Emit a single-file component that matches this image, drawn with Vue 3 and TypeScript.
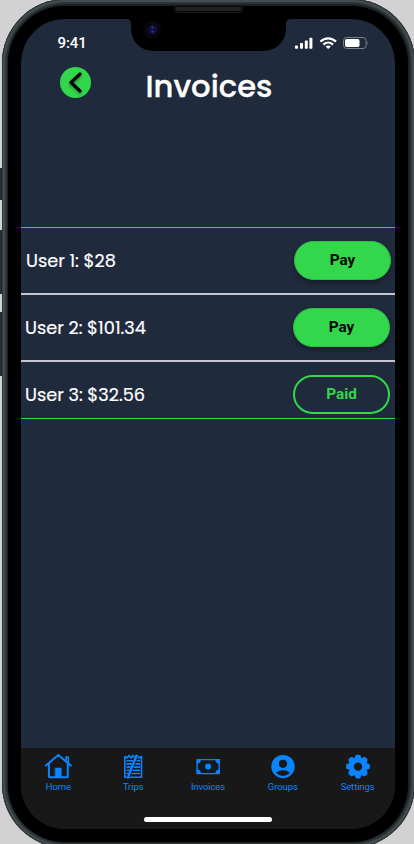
<script setup lang="ts">
interface Invoice {
  id: number
  label: string
  paid: boolean
}

const invoices: Invoice[] = [
  { id: 1, label: 'User 1: $28', paid: false },
  { id: 2, label: 'User 2: $101.34', paid: false },
  { id: 3, label: 'User 3: $32.56', paid: true },
]

const tabs: string[] = ['Home', 'Trips', 'Invoices', 'Groups', 'Settings']
const teeth: number[] = [0, 45, 90, 135, 180, 225, 270, 315]
</script>

<template>
  <div class="stage">
    <i class="side mute"></i>
    <i class="side up"></i>
    <i class="side down"></i>
    <div class="frame">
      <div class="bezel">
        <i class="speaker"></i>
        <main class="screen">
          <svg class="notch" width="165" height="33" viewBox="0 0 165 33">
            <path d="M0 0C4 0 5 2 5 6V9C5 23 15 32 29 32H136C150 32 160 23 160 9V6C160 2 161 0 165 0Z" fill="#000" />
            <circle cx="26.5" cy="10.5" r="9" fill="#08060b" />
            <circle cx="26.5" cy="10.5" r="5" fill="#0c1038" />
            <circle cx="26.5" cy="8.5" r="1.3" fill="#24337e" />
            <circle cx="26.5" cy="12.5" r="1.3" fill="#24337e" />
          </svg>

          <div class="status">
            <span class="time">9:41</span>
            <svg width="76" height="14" viewBox="0 0 76 14" fill="#fff">
              <rect x="1" y="9.4" width="3" height="3.4" rx=".7" />
              <rect x="6" y="6.9" width="3" height="5.9" rx=".7" />
              <rect x="10.8" y="4.4" width="3" height="8.4" rx=".7" />
              <rect x="15.4" y="1.8" width="3" height="11" rx=".7" />
              <g fill="none" stroke="#fff" stroke-width="2.2">
                <path d="M26.4 5.6C31 1.2 37.4 1.2 42 5.6" />
                <path d="M29.4 8.6C32.2 5.9 36.2 5.9 39 8.6" />
              </g>
              <path d="M31.6 10.5Q34.2 8.5 36.8 10.5L34.2 13.1Z" />
              <rect x="49.5" y="1.5" width="22.7" height="11" rx="3.2" fill="none" stroke="#7b818c" />
              <rect x="51" y="3" width="14.5" height="8" rx="1.8" />
              <path d="M73.5 5.3Q75 7 73.5 8.9Z" fill="#7b818c" />
            </svg>
          </div>

          <header class="header">
            <button class="back" aria-label="Back">
              <svg width="31" height="31" viewBox="0 0 31 31" fill="none" stroke-linecap="round" stroke-linejoin="round">
                <path class="chevron" d="M20 7L11 15.5L20 24" stroke="#000" stroke-width="3.2" />
              </svg>
            </button>
            <h1>Invoices</h1>
          </header>

          <ul class="list">
            <li v-for="item in invoices" :key="item.id" :class="['row', 'row-' + item.id]">
              <span class="name">{{ item.label }}</span>
              <button :class="['pill', { paid: item.paid }]">{{ item.paid ? 'Paid' : 'Pay' }}</button>
            </li>
          </ul>

          <nav class="tabs">
            <a v-for="tab in tabs" :key="tab" class="tab">
              <svg v-if="tab === 'Home'" width="28" height="28" viewBox="0 0 28 28" fill="none" stroke="#0a84ff" stroke-width="2" stroke-linecap="round" stroke-linejoin="round">
                <path d="M1.8 13.6L14.3 3L26.8 13.6M4.9 11.5V24.6Q4.9 25.3 5.6 25.3H23.1Q23.8 25.3 23.8 24.6V11.5" />
                <path d="M22.1 9V5.1H24.3V11" stroke-width="1.7" />
                <path d="M11.3 16H17.3V25.5H11.3Z" fill="#0a84ff" stroke-width=".5" />
              </svg>
              <svg v-else-if="tab === 'Trips'" width="28" height="28" viewBox="0 0 28 28" fill="none" stroke="#0a84ff" stroke-linejoin="round">
                <path d="M5.8 4.2V25.3H22.5V4.2M5.8 4.2L8 6L10 3.4L12 6L14 3.4L16 6L18 3.4L20 6L22.5 4.2" stroke-width="1.6" />
                <path d="M7.5 8.7H21M7.5 11.9H21M7.5 15.1H21M7.5 18.3H21M7.5 21.5H21" stroke-width="1.6" />
                <path d="M17.8 4L9.1 25.5" stroke="#181818" stroke-width="3.2" />
                <path d="M17.8 3L9.8 23L9.1 26.5" stroke-width="2.4" />
              </svg>
              <svg v-else-if="tab === 'Invoices'" width="28" height="28" viewBox="0 0 28 28">
                <path fill="#0a84ff" fill-rule="evenodd" d="M2.4 7H25.9V22.2H2.4ZM6.8 8.3Q6.6 11.2 3.8 11.7V17.5Q6.6 18 6.8 20.9H21.5Q21.7 18 24.5 17.5V11.7Q21.7 11.2 21.5 8.3Z" />
                <circle cx="14.1" cy="14.6" r="3" fill="#0a84ff" />
              </svg>
              <svg v-else-if="tab === 'Groups'" width="28" height="28" viewBox="0 0 28 28">
                <circle cx="14" cy="14.6" r="11.7" fill="#0a84ff" />
                <circle cx="14" cy="11.8" r="4.1" fill="#181818" />
                <path d="M6.8 20.8Q14 15.9 21.2 20.8Q14 27.2 6.8 20.8Z" fill="#181818" />
              </svg>
              <svg v-else width="28" height="28" viewBox="0 0 28 28" fill="#0a84ff">
                <g transform="translate(14 14.6)">
                  <path v-for="angle in teeth" :key="angle" :transform="`rotate(${angle})`" d="M-4 -7L-2.5 -11Q-2.2 -11.9 -1.2 -11.9H1.2Q2.2 -11.9 2.5 -11L4 -7Z" />
                  <circle r="6.7" fill="none" stroke="#0a84ff" stroke-width="5" />
                </g>
              </svg>
              <span>{{ tab }}</span>
            </a>
          </nav>
          <div class="home-area"><i class="indicator"></i></div>
        </main>
      </div>
    </div>
  </div>
</template>

<style>
html,
body {
  margin: 0;
  overflow: hidden;
}
</style>

<style scoped>
* {
  box-sizing: border-box;
}
.stage {
  position: relative;
  width: 414px;
  height: 844px;
  overflow: hidden;
  background: #d2d2d2;
  font-family: Roboto, sans-serif;
}
.side {
  position: absolute;
  left: 0;
  width: 5px;
  background: #272d2f;
}
.mute {
  top: 168px;
  height: 32px;
}
.up {
  top: 230px;
  height: 64px;
}
.down {
  top: 312px;
  height: 64px;
}
.frame {
  position: relative;
  width: 413px;
  height: 849px;
  margin: -1px 0 0 1.5px;
  padding: 7px 6.5px;
  border-radius: 64px;
  background: #1b2022;
  box-shadow: inset 0 0 0 1px #30373a, inset 0 0 1px 3px #454e51, inset 0 0 1px 5px #2f3639;
}
.bezel {
  position: relative;
  width: 400px;
  height: 836px;
  padding: 13px;
  border-radius: 57px;
  background: #000;
}
.speaker {
  position: absolute;
  left: 166px;
  top: -1px;
  width: 69px;
  height: 8px;
  border: 1px solid #191919;
  border-radius: 2px 2px 4px 4px;
  background: #222;
  box-shadow: inset 0 0 0 1px #050505;
}
.screen {
  position: relative;
  display: flex;
  flex-direction: column;
  width: 374px;
  height: 810px;
  overflow: hidden;
  border-radius: 44px;
  background: #1f2a3c;
}
.notch {
  position: absolute;
  left: 104.5px;
  top: 0;
}
.status {
  display: flex;
  justify-content: space-between;
  height: 48px;
  padding: 17px 25px 0 36.5px;
  color: #fff;
}
.time {
  font: 500 15px/15px Roboto, sans-serif;
  letter-spacing: -0.1px;
}
.header {
  display: flex;
  height: 160px;
  padding-left: 39px;
}
.back {
  width: 31px;
  height: 31px;
  padding: 0;
  border: 0;
  border-radius: 50%;
  background: #32d74b;
}
.back svg {
  display: block;
}
.chevron {
  filter: drop-shadow(0 2px 1.5px rgba(0, 0, 0, 0.3));
}
h1 {
  margin: 0 0 0 54.4px;
  color: #fff;
  font: 500 30.7px/39px Poppins, Inter, sans-serif;
  -webkit-text-stroke: 0.3px #fff;
}
.list {
  height: 192px;
  margin: 0;
  padding: 0;
  list-style: none;
  border-top: 1px solid #32d74b;
  border-bottom: 1px solid #32d74b;
}
.row {
  display: flex;
  justify-content: space-between;
  height: 67px;
  padding: 13px 5px 0 4px;
  border-bottom: 2px solid #c6c6ca;
}
.row-1 {
  padding: 13px 4px 0 5px;
}
.row-3 {
  height: 56px;
  border-bottom: 0;
}
.name {
  color: #fff;
  font: 400 17.7px/39px Poppins, Inter, sans-serif;
  -webkit-text-stroke: 0.2px #fff;
}
.pill {
  width: 97px;
  height: 39px;
  padding: 0;
  border: 1px solid #2bc344;
  border-radius: 20px;
  background: #32d74b;
  color: #000;
  font: 700 15.3px/35px Roboto, sans-serif;
  box-shadow: 0 3px 4px rgba(0, 0, 0, 0.3);
}
.paid {
  border: 2px solid #32d74b;
  background: none;
  color: #32d74b;
  line-height: 33px;
  box-shadow: none;
}
.tabs {
  display: grid;
  grid-template-columns: repeat(5, 1fr);
  height: 62px;
  margin-top: auto;
  padding-top: 4px;
  background: #181818;
}
.tab {
  display: flex;
  flex-direction: column;
  align-items: center;
  color: #0a84ff;
  font: 400 9.5px/14px Roboto, sans-serif;
  letter-spacing: -0.1px;
}
.home-area {
  display: flex;
  justify-content: center;
  height: 19px;
  padding-top: 6.5px;
  background: #181818;
}
.indicator {
  width: 128px;
  height: 5px;
  border-radius: 3px;
  background: #fff;
}
</style>
